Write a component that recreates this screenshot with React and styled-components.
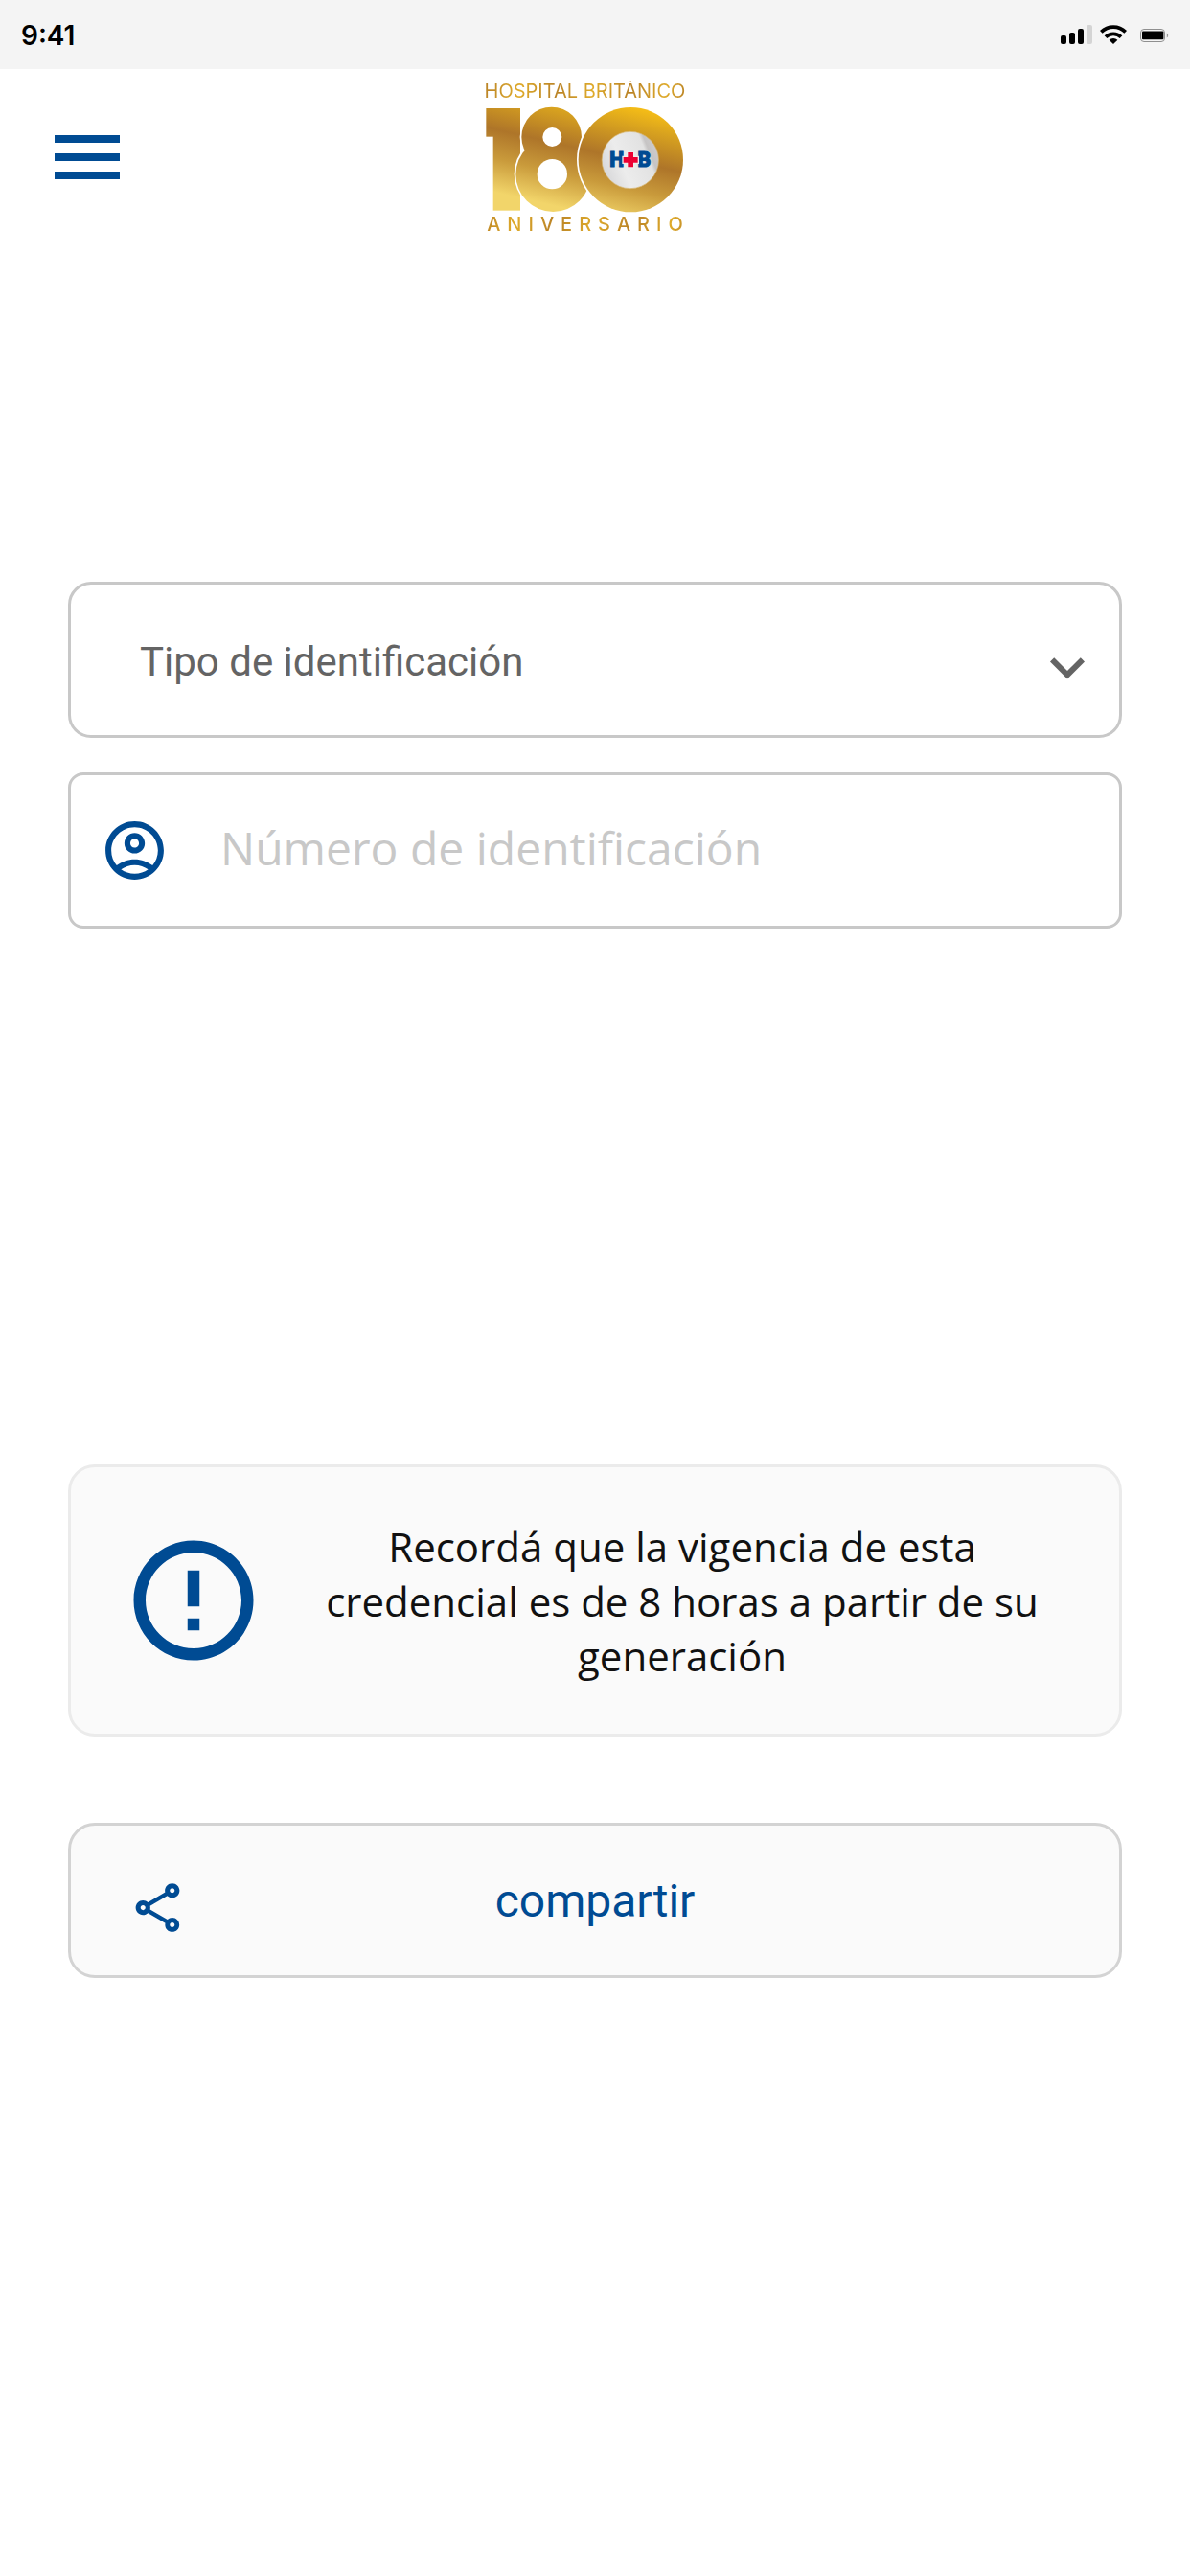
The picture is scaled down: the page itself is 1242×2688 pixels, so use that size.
import React from "react";
import styled, { createGlobalStyle } from "styled-components";

const colors = {
  brand: "#004b93",
  line: "#c8c8c8",
  surface: "#fafafa",
  muted: "#646464",
};

const GlobalStyle = createGlobalStyle`
  *, *::before, *::after { box-sizing: border-box; }
  body {
    margin: 0;
    background: #ffffff;
    color: #111111;
    font-family: Roboto, "Liberation Sans", sans-serif;
  }
  button, select, input { font: inherit; color: inherit; }
  svg { display: block; flex: none; }
`;

const Page = styled.div`
  min-height: 100vh;
  background: #ffffff;
`;

const StatusBar = styled.div`
  display: flex;
  align-items: center;
  justify-content: space-between;
  height: 72px;
  padding: 0 22px;
  background: #f4f4f4;
  color: #000000;
`;

const Clock = styled.time`
  padding-top: 2px;
  font-family: Inter, sans-serif;
  font-size: 28px;
  font-weight: 600;
  line-height: 36px;
`;

const StatusIcons = styled.div`
  display: flex;
  align-items: center;
  gap: 8px;
`;

const BatteryBox = styled.span`
  padding-left: 6px;
`;

const Header = styled.header`
  display: grid;
  grid-template-columns: 1fr auto 1fr;
  align-items: center;
  padding: 12px 78px 0 57px;
`;

const MenuButton = styled.button`
  justify-self: start;
  padding: 0 0 2px;
  border: 0;
  background: none;
  color: ${colors.brand};
  cursor: pointer;
`;

const Brand = styled.div`
  display: flex;
  flex-direction: column;
  align-items: center;
  white-space: nowrap;
  font-family: Inter, sans-serif;
`;

const goldText = `
  background: linear-gradient(100deg, #b98226, #dfab2b 18%, #b98226 36%, #dfab2b 54%, #b98226 72%, #dfab2b 90%, #b98226);
  background-clip: text;
  -webkit-background-clip: text;
  color: transparent;
`;

const BrandName = styled.span`
  ${goldText}
  margin-bottom: 5px;
  font-size: 20px;
  font-weight: 400;
  line-height: 22px;
`;

const BrandTagline = styled.span`
  ${goldText}
  padding-left: 7px;
  font-size: 20px;
  font-weight: 500;
  line-height: 24px;
  letter-spacing: 7px;
`;

const Main = styled.main`
  display: flex;
  flex-direction: column;
  padding: 361px 71px 72px;
`;

const Form = styled.form`
  display: flex;
  flex-direction: column;
  gap: 36px;
  margin-bottom: 559px;
`;

const Field = styled.label`
  display: flex;
  align-items: center;
  height: 163px;
  border: 3px solid ${colors.line};
  border-radius: ${(p) => p.$radius}px;
  background: #ffffff;
  color: ${colors.brand};
`;

const SelectField = styled(Field)`
  display: grid;
  color: ${colors.muted};
`;

const Select = styled.select`
  grid-area: 1 / 1;
  width: 100%;
  height: 100%;
  padding: 4px 96px 0 72px;
  border: 0;
  background: none;
  appearance: none;
  font-size: 42px;
  outline: none;
`;

const SelectArrow = styled.span`
  grid-area: 1 / 1;
  justify-self: end;
  padding-right: 18px;
  pointer-events: none;
`;

const InputField = styled(Field)`
  gap: 53px;
  padding: 0 30px;
`;

const Input = styled.input`
  flex: 1;
  min-width: 0;
  height: 100%;
  padding: 0 0 6px;
  border: 0;
  background: none;
  color: #111111;
  font-family: "Open Sans", sans-serif;
  font-size: 48px;
  outline: none;
  &::placeholder { color: ${colors.line}; opacity: 1; }
`;

const Notice = styled.section`
  display: flex;
  align-items: center;
  gap: 50px;
  min-height: 284px;
  margin-bottom: 90px;
  padding: 53px 71px 53px 53px;
  border: 3px solid #ebebeb;
  border-radius: 28px;
  background: ${colors.surface};
  color: ${colors.brand};
`;

const NoticeText = styled.p`
  flex: 1;
  margin: 0;
  color: #111111;
  font-family: "Open Sans", sans-serif;
  font-size: 42px;
  line-height: 57px;
  text-align: center;
`;

const ShareButton = styled.button`
  display: grid;
  grid-template-columns: 1fr auto 1fr;
  align-items: center;
  height: 162px;
  padding: 2px 60px 0;
  border: 3px solid #d3d3d3;
  border-radius: 28px;
  background: ${colors.surface};
  color: ${colors.brand};
  font-size: 48px;
  line-height: 56px;
  cursor: pointer;
`;

const SignalIcon = () => (
  <svg width="33" height="20" viewBox="0 0 33 20" aria-hidden="true">
    <rect x="0" y="11" width="6" height="9" rx="2" />
    <rect x="9" y="8" width="6" height="12" rx="2" />
    <rect x="18" y="4" width="6" height="16" rx="2" />
    <rect x="27" y="0" width="6" height="20" rx="2" fill="#d4d4d4" />
  </svg>
);

const WifiIcon = () => (
  <svg width="28" height="20" viewBox="0 0 28 20" aria-hidden="true">
    <g fill="none" stroke="#000000" strokeWidth="3.8">
      <path d="M1.3 7.4A18 18 0 0 1 26.7 7.4" />
      <path d="M6 12.6A11.4 11.4 0 0 1 22 12.6" />
    </g>
    <path d="M9.6 15.8a6.4 6.4 0 0 1 8.8 0L14 20z" />
  </svg>
);

const BatteryIcon = () => (
  <svg width="30" height="20" viewBox="0 0 30 20" aria-hidden="true">
    <rect x="0.5" y="4.5" width="25" height="13" rx="3.5" fill="none" stroke="#8f8f8f" />
    <rect x="2" y="6.6" width="22.4" height="8.6" rx="1" />
    <path d="M27.8 8.6q1.4 .6 1.4 2.4t-1.4 2.4z" fill="#9a9a9a" />
  </svg>
);

const MenuIcon = () => (
  <svg width="68" height="46" viewBox="0 0 68 46" fill="currentColor" aria-hidden="true">
    <rect width="68" height="8" />
    <rect y="19" width="68" height="8" />
    <rect y="38" width="68" height="8" />
  </svg>
);

const AnniversaryEmblem = () => (
  <svg width="209" height="111" viewBox="80 123 627 333" role="img" aria-label="180">
    <defs>
      <linearGradient id="gold" gradientUnits="userSpaceOnUse" x1="420" y1="60" x2="330" y2="450">
        <stop offset="0.08" stopColor="#f6be16" />
        <stop offset="0.24" stopColor="#d8a21f" />
        <stop offset="0.5" stopColor="#ae7529" />
        <stop offset="0.72" stopColor="#c99a3b" />
        <stop offset="0.98" stopColor="#f2d56a" />
      </linearGradient>
      <linearGradient id="silver" x1="0" y1="0.7" x2="1" y2="0.3">
        <stop offset="0" stopColor="#d6d6d8" />
        <stop offset="0.35" stopColor="#ececec" />
        <stop offset="0.78" stopColor="#e2e2e2" />
        <stop offset="0.84" stopColor="#c6c4c4" />
        <stop offset="1" stopColor="#cfcdcd" />
      </linearGradient>
    </defs>
    <g fill="url(#gold)">
      <rect x="84" y="129" width="107" height="89" />
      <rect x="106" y="129" width="85" height="320" />
    </g>
    <g fill="#ffffff">
      <circle cx="289" cy="219" r="99" />
      <circle cx="294" cy="335" r="122" />
    </g>
    <g fill="url(#gold)">
      <circle cx="289" cy="219" r="94" />
      <circle cx="294" cy="336" r="117" />
    </g>
    <circle cx="291" cy="219" r="30" fill="#ffffff" />
    <circle cx="291" cy="335" r="47" fill="#ffffff" />
    <circle cx="537" cy="290" r="169" fill="#ffffff" />
    <circle cx="537" cy="290" r="164" fill="url(#gold)" />
    <circle cx="535.5" cy="291" r="89" fill="url(#silver)" stroke="#d7b469" strokeWidth="2" />
    <g
      fontFamily="Roboto, sans-serif"
      fontWeight="900"
      fontSize="64"
      fill={colors.brand}
      stroke={colors.brand}
      strokeWidth="3"
    >
      <text x="471" y="313">H</text>
      <text x="600" y="313" textAnchor="end">B</text>
    </g>
    <path
      d="M528 267h17v15h14v17h-14v14h-17v-14h-14v-17h14z"
      fill="#ec0033"
      stroke="#ececec"
      strokeWidth="8"
      paintOrder="stroke"
    />
  </svg>
);

const ArrowIcon = () => (
  <svg width="72" height="72" viewBox="0 -2.5 24 24" fill="currentColor" aria-hidden="true">
    <path d="M7.41 8.59 12 13.17l4.59-4.58L18 10l-6 6-6-6z" />
  </svg>
);

const AccountIcon = () => (
  <svg width="73" height="73" viewBox="0 0 24 24" fill="currentColor" aria-hidden="true">
    <path d="M12 2C6.48 2 2 6.48 2 12s4.48 10 10 10 10-4.48 10-10S17.52 2 12 2zM7.35 18.5C8.66 17.56 10.26 17 12 17s3.34.56 4.65 1.5c-1.31.94-2.91 1.5-4.65 1.5s-3.34-.56-4.65-1.5zm10.79-1.38C16.45 15.8 14.32 15 12 15s-4.45.8-6.14 2.12A7.96 7.96 0 0 1 4 12c0-4.42 3.58-8 8-8s8 3.58 8 8c0 1.95-.7 3.73-1.86 5.12z" />
    <path d="M12 6c-1.93 0-3.5 1.57-3.5 3.5S10.07 13 12 13s3.5-1.57 3.5-3.5S13.93 6 12 6zm0 5c-.83 0-1.5-.67-1.5-1.5S11.17 8 12 8s1.5.67 1.5 1.5S12.83 11 12 11z" />
  </svg>
);

const AlertIcon = () => (
  <svg width="150" height="150" viewBox="0 0 24 24" fill="currentColor" aria-hidden="true">
    <path d="M11 15h2v2h-2zm0-8h2v6h-2zm.99-5C6.47 2 2 6.48 2 12s4.47 10 9.99 10C17.52 22 22 17.52 22 12S17.52 2 11.99 2zM12 20c-4.42 0-8-3.58-8-8s3.58-8 8-8 8 3.58 8 8-3.58 8-8 8z" />
  </svg>
);

const ShareIcon = () => (
  <svg width="61" height="61" viewBox="0 -2.4 24 24" fill="currentColor" overflow="visible" aria-hidden="true">
    <path d="M18 16.08c-.76 0-1.44.3-1.96.77L8.91 12.7c.05-.23.09-.46.09-.7s-.04-.47-.09-.7l7.05-4.11c.54.5 1.25.81 2.04.81 1.66 0 3-1.34 3-3s-1.34-3-3-3-3 1.34-3 3c0 .24.04.47.09.7L8.04 9.81C7.5 9.31 6.79 9 6 9c-1.66 0-3 1.34-3 3s1.34 3 3 3c.79 0 1.5-.31 2.04-.81l7.12 4.16c-.05.21-.08.43-.08.65 0 1.61 1.31 2.92 2.92 2.92s2.92-1.31 2.92-2.92-1.31-2.92-2.92-2.92zM18 4c.55 0 1 .45 1 1s-.45 1-1 1-1-.45-1-1 .45-1 1-1zM6 13c-.55 0-1-.45-1-1s.45-1 1-1 1 .45 1 1-.45 1-1 1zm12 7.02c-.55 0-1-.45-1-1s.45-1 1-1 1 .45 1 1-.45 1-1 1z" />
  </svg>
);

export default function App() {
  return (
    <Page>
      <GlobalStyle />
      <StatusBar>
        <Clock>9:41</Clock>
        <StatusIcons>
          <SignalIcon />
          <WifiIcon />
          <BatteryBox>
            <BatteryIcon />
          </BatteryBox>
        </StatusIcons>
      </StatusBar>
      <Header>
        <MenuButton type="button" aria-label="Menú">
          <MenuIcon />
        </MenuButton>
        <Brand>
          <BrandName>HOSPITAL BRITÁNICO</BrandName>
          <AnniversaryEmblem />
          <BrandTagline>ANIVERSARIO</BrandTagline>
        </Brand>
      </Header>
      <Main>
        <Form>
          <SelectField $radius={24} htmlFor="tipo">
            <Select id="tipo" aria-label="Tipo de identificación" defaultValue="">
              <option value="">Tipo de identificación</option>
            </Select>
            <SelectArrow>
              <ArrowIcon />
            </SelectArrow>
          </SelectField>
          <InputField $radius={16} htmlFor="numero">
            <AccountIcon />
            <Input
              id="numero"
              type="text"
              inputMode="numeric"
              aria-label="Número de identificación"
              placeholder="Número de identificación"
            />
          </InputField>
        </Form>
        <Notice>
          <AlertIcon />
          <NoticeText>
            Recordá que la vigencia de esta credencial es de 8 horas a partir de su generación
          </NoticeText>
        </Notice>
        <ShareButton type="button">
          <ShareIcon />
          <span>compartir</span>
        </ShareButton>
      </Main>
    </Page>
  );
}
